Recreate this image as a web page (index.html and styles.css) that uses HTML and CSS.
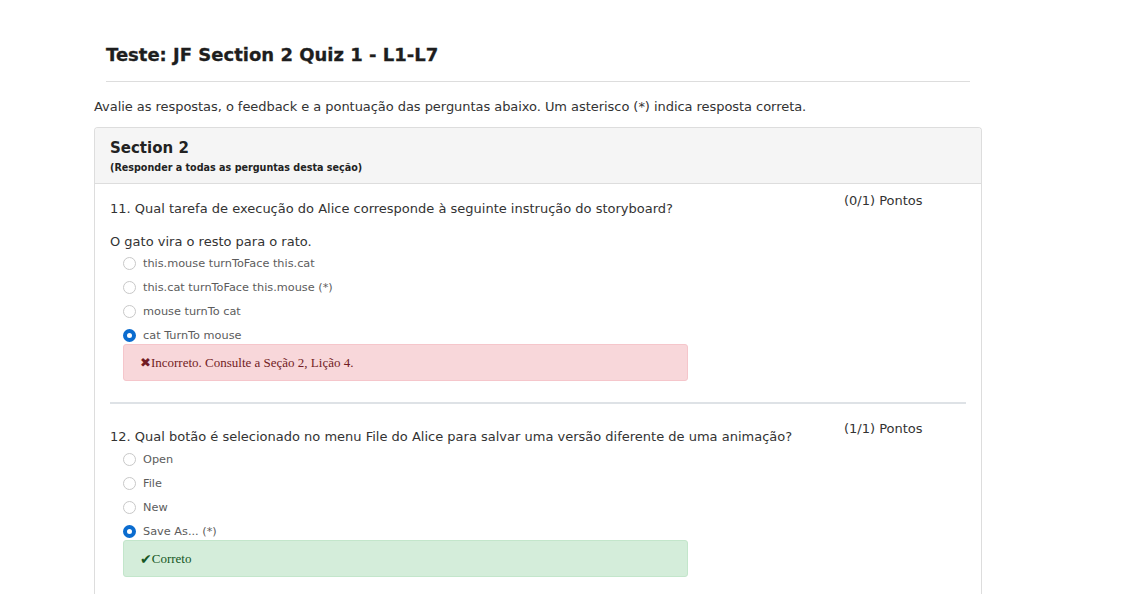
FILE: index.html
```html
<!DOCTYPE html>
<html lang="pt">
<head>
<meta charset="utf-8">
<title>Teste</title>
<link rel="stylesheet" href="styles.css">
</head>
<body>
<div class="page">
  <div class="head">
    <h1 class="title">Teste: JF Section 2 Quiz 1 - L1-L7</h1>
  </div>
  <p class="intro">Avalie as respostas, o feedback e a pontuação das perguntas abaixo. Um asterisco (*) indica resposta correta.</p>
  <div class="panel">
    <div class="panel-head">
      <div class="sec-title">Section 2</div>
      <div class="sec-sub">(Responder a todas as perguntas desta seção)</div>
    </div>
    <div class="panel-body">
      <div class="question q1">
        <div class="q-row">
          <div class="q-text">11. Qual tarefa de execução do Alice corresponde à seguinte instrução do storyboard?</div>
          <div class="points">(0/1) Pontos</div>
        </div>
        <div class="q-sub">O gato vira o resto para o rato.</div>
        <ul class="opts">
          <li class="opt"><span class="radio"></span>this.mouse turnToFace this.cat</li>
          <li class="opt"><span class="radio"></span>this.cat turnToFace this.mouse (*)</li>
          <li class="opt"><span class="radio"></span>mouse turnTo cat</li>
          <li class="opt"><span class="radio checked"></span>cat TurnTo mouse</li>
        </ul>
        <div class="alert alert-bad"><span class="ico">✖</span>Incorreto. Consulte a Seção 2, Lição 4.</div>
      </div>
      <div class="divider"></div>
      <div class="question q2">
        <div class="q-row">
          <div class="q-text">12. Qual botão é selecionado no menu File do Alice para salvar uma versão diferente de uma animação?</div>
          <div class="points">(1/1) Pontos</div>
        </div>
        <ul class="opts">
          <li class="opt"><span class="radio"></span>Open</li>
          <li class="opt"><span class="radio"></span>File</li>
          <li class="opt"><span class="radio"></span>New</li>
          <li class="opt"><span class="radio checked"></span>Save As... (*)</li>
        </ul>
        <div class="alert alert-good"><span class="ico">✔</span>Correto</div>
      </div>
    </div>
  </div>
</div>
</body>
</html>
```
FILE: styles.css
```css
html, body {
  margin: 0;
  padding: 0;
  background: #fff;
}
body {
  font-family: "DejaVu Sans", Verdana, sans-serif;
  color: #222;
  font-size: 13px;
}
.page {
  width: 888px;
  margin-left: 94px;
}
.head {
  margin: 0 12px;
  padding-top: 43px;
  padding-bottom: 14px;
  border-bottom: 1px solid #ddd;
}
.title {
  margin: 0;
  font-size: 18px;
  font-weight: bold;
  line-height: 24px;
  color: #1e1e1e;
  -webkit-text-stroke: 0.3px #1e1e1e;
}
.intro {
  margin: 16px 0 11px;
  line-height: 18px;
  font-size: 13px;
  color: #333;
  letter-spacing: -0.05px;
}
.panel {
  border: 1px solid #ddd;
  border-bottom: none;
  border-radius: 4px 4px 0 0;
  height: 470px;
}
.panel-head {
  background: #f5f5f5;
  border-bottom: 1px solid #ddd;
  border-radius: 3px 3px 0 0;
  padding: 11px 15px 7px;
  height: 37px;
}
.sec-title {
  font-size: 15px;
  font-weight: bold;
  line-height: 18px;
  color: #222;
}
.sec-sub {
  font-size: 9.6px;
  font-weight: bold;
  line-height: 14px;
  margin-top: 4px;
  color: #222;
}
.panel-body {
  padding: 0 15px;
}
.question {
  padding-top: 8px;
}
.q-row {
  display: flex;
  justify-content: space-between;
  align-items: flex-start;
}
.q-text {
  padding-top: 8px;
  line-height: 18px;
  color: #333;
}
.points {
  width: 122px;
  line-height: 18px;
  color: #333;
}
.q-sub {
  margin-top: 15px;
  line-height: 18px;
  color: #333;
}
.opts {
  list-style: none;
  margin: 0;
  padding: 0 0 0 13px;
}
.q2 {
  padding-top: 16px;
}
.q2 .opts {
  margin-top: 1px;
}
.opt {
  display: flex;
  align-items: center;
  height: 24px;
  font-size: 11.3px;
  color: #5c5c5c;
}
.radio {
  width: 11px;
  height: 11px;
  border: 1px solid #c8c8c8;
  border-radius: 50%;
  margin-right: 7px;
  box-sizing: content-box;
}
.radio.checked {
  border: 4px solid #0b6ccf;
  width: 5px;
  height: 5px;
  background: #fff;
}
.alert {
  margin: -3px 0 0 13px;
  width: 565px;
  height: 37px;
  box-sizing: border-box;
  border: 1px solid transparent;
  border-radius: 3px;
  display: flex;
  align-items: center;
  padding-left: 16px;
  font-family: "Liberation Serif", "Times New Roman", serif;
  font-size: 13px;
}
.alert-bad {
  background: #f8d7da;
  border-color: #f5c6cb;
  color: #721c24;
}
.alert-good {
  background: #d4edda;
  border-color: #c3e6cb;
  color: #155724;
}
.ico {
  font-family: "DejaVu Sans", sans-serif;
  font-size: 13px;
  font-weight: bold;
  margin-right: 0;
}
.alert-good .ico {
  font-size: 14px;
}
.divider {
  margin-top: 21px;
  height: 2px;
  background: #dee2e6;
}
```
